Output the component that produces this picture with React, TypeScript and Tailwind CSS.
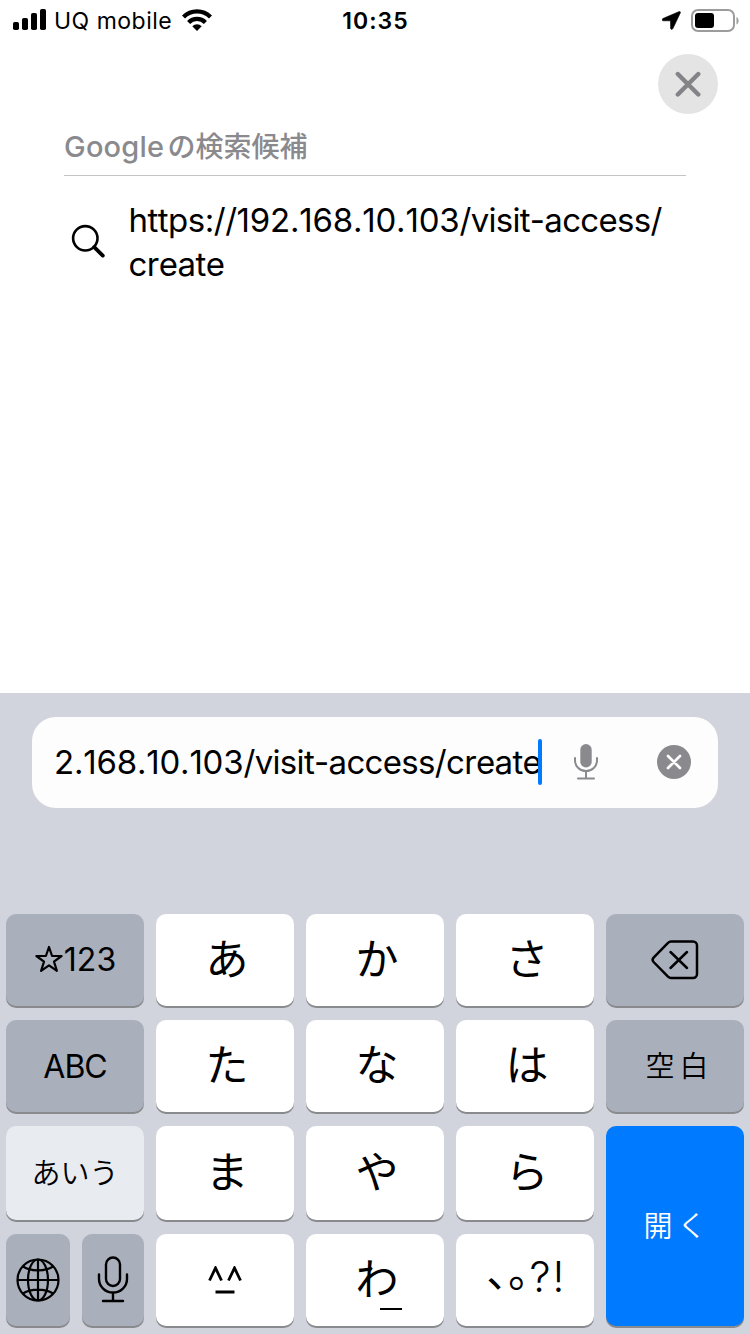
import type { ReactNode } from "react";

const tones = {
  light: "bg-white text-black",
  dark: "bg-[#a9afbb] text-black",
  active: "bg-[#e8ebf0] text-black",
  primary: "bg-[#007aff] text-white",
};

function Key({
  tone = "light",
  className = "",
  label,
  children,
}: {
  tone?: keyof typeof tones;
  className?: string;
  label?: string;
  children: ReactNode;
}) {
  return (
    <button
      type="button"
      aria-label={label}
      className={`flex min-w-0 items-center justify-center rounded-[10px] shadow-[0_2px_0_#898a8d] ${tones[tone]} ${className}`}
    >
      {children}
    </button>
  );
}

function Kana({ children }: { children: ReactNode }) {
  return <span className="block pb-[3px] pl-1 text-[43px] leading-[60px]">{children}</span>;
}

function StatusBar() {
  return (
    <header className="grid h-10 grid-cols-3 items-center text-[23px] leading-7">
      <div className="flex items-center pl-[13px]">
        <svg width="33" height="22" viewBox="0 0 33 22" className="shrink-0">
          <rect x="0" y="13" width="6" height="8" rx="1.8" />
          <rect x="9" y="9" width="6" height="12" rx="1.8" />
          <rect x="18" y="4" width="6" height="17" rx="1.8" />
          <rect x="27" y="0" width="6" height="21" rx="1.8" />
        </svg>
        <span className="ml-2 w-[128px] pt-0.5 tracking-[0.5px] whitespace-nowrap">UQ mobile</span>
        <svg width="30" height="23" viewBox="0 0 30 23" className="shrink-0">
          <g fill="none" stroke="#000" strokeWidth="4.3">
            <path d="M1.5 8.1a19 19 0 0 1 27 0" />
            <path d="M6.6 13.4a11.8 11.8 0 0 1 16.8 0" />
          </g>
          <path d="M10.3 17.3a6.700 6.700 0 0 1 9.400 0L15 22z" />
        </svg>
      </div>
      <div className="pt-0.5 pl-px text-center font-semibold tracking-[1px]">10:35</div>
      <div className="flex items-center justify-end pr-[11px]">
        <svg width="19" height="19" viewBox="0 0 19 19" className="mr-[10px]">
          <path d="M17.200.6.9 7.500c-1.200.6-.9 2.300.5 2.300h7.100l.1 7.300c0 1.500 1.700 1.800 2.300.5L18.300 1.900c.4-.9-.2-1.600-1.100-1.300z" stroke="#000" strokeWidth=".6" />
        </svg>
        <svg width="48" height="23" viewBox="0 0 48 23">
          <rect x="1" y="1" width="42" height="21" rx="6" fill="none" stroke="#9c9c9c" strokeWidth="2" />
          <rect x="4" y="4" width="19" height="15" rx="3" />
          <path d="M45.500 8c2.700 1 2.700 6.500 0 7.500z" fill="#9c9c9c" />
        </svg>
      </div>
    </header>
  );
}

function Suggestions() {
  return (
    <main className="flex h-[653px] flex-col">
      <div className="flex justify-end pt-[14px] pr-8">
        <button type="button" aria-label="閉じる" className="flex size-[60px] items-center justify-center rounded-full bg-[#e4e4e4]">
          <svg width="26" height="26" viewBox="0 0 26 26" stroke="#838388" strokeWidth="4.400" strokeLinecap="round">
            <path d="m2.800 3 20.500 20.500M23.300 3 2.800 23.500" />
          </svg>
        </button>
      </div>
      <section className="mx-16">
        <h2 className="flex h-[62px] items-center border-b border-[#c4c4c6] pt-[5px] text-[28px] leading-10 font-medium text-[#8a8a8e]">
          <span className="w-[103.500px] text-[29px] tracking-[0.2px]">Google</span>
          <span className="text-[28px]">の検索候補</span>
        </h2>
        <div className="flex items-center pt-[22px]">
          <svg width="34" height="34" viewBox="0 0 34 34" fill="none" stroke="#000" className="mt-[-2px] ml-[7px] shrink-0">
            <circle cx="14.300" cy="14.300" r="12.200" strokeWidth="2.600" />
            <path d="m23.200 23.200 8.600 8.400" strokeWidth="3.800" strokeLinecap="round" />
          </svg>
          <p className="ml-[23.500px] text-[33px] leading-[44px] tracking-[-0.5px] whitespace-nowrap [font-kerning:none]">
            https://<span className="tracking-[-0.2px]">192.168.10.103</span>
            <span className="tracking-[-0.7px]">/visit-access/</span>
            <br />
            create
          </p>
        </div>
      </section>
    </main>
  );
}

function AddressField() {
  return (
    <div className="mx-8 flex h-[91px] items-center rounded-[24px] bg-[#fdfdfd] pb-0.5 pl-[22px]">
      <span className="w-[484px] text-[33px] leading-[44px] tracking-[-0.67px] whitespace-nowrap [font-kerning:none]">
        <span className="tracking-[-0.2px]">2.168.10.103</span>/visit-access/create
      </span>
      <span className="h-[46px] w-1 shrink-0 rounded-sm bg-[#007aff]" />
      <svg width="26" height="37" viewBox="0 0 26 37" fill="none" stroke="#8a8a8e" strokeWidth="2" strokeLinecap="round" className="ml-[31px] shrink-0">
        <rect x="7.300" y="1" width="11.400" height="23.500" rx="5.700" fill="#8a8a8e" stroke="none" />
        <path d="M2 15v2.500a11 10.500 0 0 0 22 0V15M13 28v7M5 35.500h16" />
      </svg>
      <svg width="34" height="34" viewBox="0 0 34 34" className="ml-[58px] shrink-0">
        <circle cx="17" cy="17" r="17" fill="#8a8a8e" />
        <path d="m11 11 12 12M23 11 11 23" stroke="#fdfdfd" strokeWidth="2.700" strokeLinecap="round" />
      </svg>
    </div>
  );
}

function Keyboard() {
  return (
    <div className="mx-1.5 mt-[106px] grid grid-cols-5 grid-rows-[92px_92px_94px_92px] gap-x-3 gap-y-3.5">
      <Key tone="dark">
        <svg width="30" height="28" viewBox="0 0 29 28" fill="none" stroke="#000" strokeWidth="2.200" strokeLinejoin="round" className="mb-[3px]">
          <path d="m14.500 2 3.100 9h9.500l-7.600 5.700 2.900 9.100-7.900-5.500-7.900 5.500 2.900-9.100L1.900 11h9.500z" />
        </svg>
        <span className="text-[32px] [font-kerning:none]">123</span>
      </Key>
      <Key><Kana>あ</Kana></Key>
      <Key><Kana>か</Kana></Key>
      <Key><Kana>さ</Kana></Key>
      <Key tone="dark" label="削除">
        <svg width="48" height="40" viewBox="0 0 48 40" fill="none" stroke="#000" strokeWidth="2.500" strokeLinecap="round" strokeLinejoin="round">
          <path d="M20 1.500h22a4 4 0 0 1 4 4v28.500a4 4 0 0 1-4 4H20q-1.600 0-3-1.300L2.600 22q-2-2.200 0-4.400L17 2.800q1.400-1.300 3-1.300z" />
          <path d="m19.500 12 16.500 16M36 12 19.500 28" />
        </svg>
      </Key>

      <Key tone="dark"><span className="pt-0.5 text-[32px] tracking-[-1px]">ABC</span></Key>
      <Key><Kana>た</Kana></Key>
      <Key><Kana>な</Kana></Key>
      <Key><Kana>は</Kana></Key>
      <Key tone="dark"><span className="ml-1 flex gap-[5px] pt-0.5 text-[29px] font-[350]"><span>空</span><span>白</span></span></Key>

      <Key tone="active"><span className="pt-px text-[29px] font-[350]">あいう</span></Key>
      <Key><Kana>ま</Kana></Key>
      <Key><Kana>や</Kana></Key>
      <Key><Kana>ら</Kana></Key>
      <Key tone="primary" className="row-span-2"><span className="flex gap-[5px] pt-0.5 text-[29px] font-[350]"><span>開</span><span>く</span></span></Key>

      <div className="grid grid-cols-[64px_62px] gap-3">
        <Key tone="dark" label="地球">
          <svg width="44" height="44" viewBox="0 0 44 44" fill="none" stroke="#000" strokeWidth="2.200" className="mb-px">
            <circle cx="22" cy="22" r="20.500" />
            <ellipse cx="22" cy="22" rx="10" ry="20.500" />
            <path d="M22 1.500v41M1.500 22h41M7 8.500c8 5.200 22 5.200 30 0M7 35.500c8-5.200 22-5.200 30 0" />
          </svg>
        </Key>
        <Key tone="dark" label="音声入力">
          <svg width="32" height="47" viewBox="0 0 32 47" fill="none" stroke="#000" strokeWidth="2.400" strokeLinecap="round" className="mb-0.5">
            <rect x="9" y="1.500" width="14" height="28.500" rx="7" />
            <path d="M2 18.500V23a14 13.500 0 0 0 28 0v-4.500M16 36.500v8.500M6 45h20" />
          </svg>
        </Key>
      </div>
      <Key label="^_^">
        <svg width="34" height="28" viewBox="0 0 34 28" fill="none" stroke="#000" strokeWidth="2.800">
          <path d="m1.500 14.500 6-12.500 6 12.500M20.500 14.500 26.500 2l6 12.500M7.500 26h19" />
        </svg>
      </Key>
      <Key>
        <span className="relative">
          <Kana>わ</Kana>
          <span className="absolute right-[-3px] bottom-[2px] h-0.5 w-[22px] bg-black" />
        </span>
      </Key>
      <Key>
        <span className="flex items-center pb-1.5 pl-0.5 leading-[60px]">
          <span className="pb-2.5 text-[42px]">､｡</span>
          <span className="text-[42px] font-light">?</span>
          <span className="ml-0.5 text-[42px] font-light">!</span>
        </span>
      </Key>
    </div>
  );
}

export default function App() {
  return (
    <div className="flex h-[1334px] w-[750px] flex-col overflow-hidden bg-white font-['Inter','Noto_Sans_CJK_JP',sans-serif] text-black">
      <StatusBar />
      <Suggestions />
      <footer className="flex-1 bg-[#d1d4dc] pt-6">
        <AddressField />
        <Keyboard />
      </footer>
    </div>
  );
}
